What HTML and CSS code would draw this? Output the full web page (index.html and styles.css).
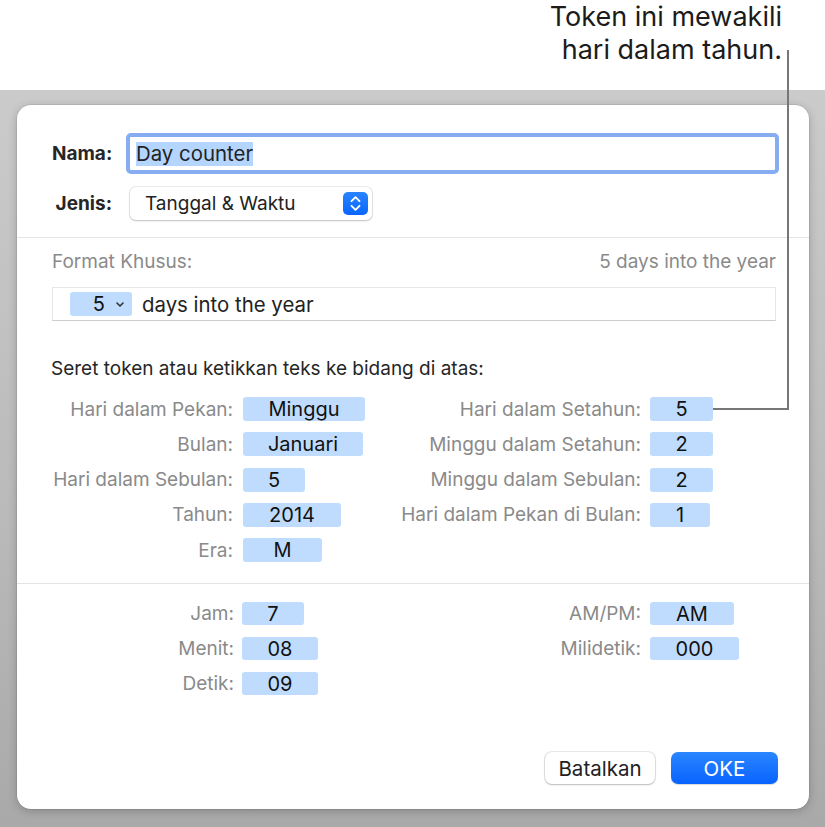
FILE: index.html
```html
<!DOCTYPE html>
<html lang="id">
<head>
<meta charset="utf-8">
<title>Day counter</title>
<link rel="stylesheet" href="styles.css">
</head>
<body>
<div class="page">
  <header class="note">
    <p>Token ini mewakili<br>hari dalam tahun.</p>
  </header>

  <main class="backdrop">
    <section class="dialog">
      <div class="sec sec-top">
        <div class="frow">
          <span class="flabel">Nama:</span>
          <div class="name-field"><span class="sel">Day counter</span></div>
        </div>
        <div class="frow frow-jenis">
          <span class="flabel">Jenis:</span>
          <div class="popup">
            <span class="popup-text">Tanggal &amp; Waktu</span>
            <span class="stepper">
              <svg width="25" height="23" viewBox="0 0 25 23"><path d="M8.5 9.2 L12.5 5.2 L16.5 9.2 M8.5 13.8 L12.5 17.8 L16.5 13.8" fill="none" stroke="#fff" stroke-width="1.9" stroke-linecap="round" stroke-linejoin="round"/></svg>
            </span>
          </div>
        </div>
      </div>

      <div class="sec sec-date">
        <div class="fmt-head">
          <span>Format Khusus:</span>
          <span>5 days into the year</span>
        </div>
        <div class="fmt-field">
          <span class="tok tok-drop">5<svg width="8" height="5" viewBox="0 0 8 5"><path d="M1 1 L4 4 L7 1" fill="none" stroke="#333" stroke-width="1.6" stroke-linecap="round" stroke-linejoin="round"/></svg></span>
          <span class="fmt-text">days into the year</span>
        </div>
        <p class="hint">Seret token atau ketikkan teks ke bidang di atas:</p>
        <div class="tgrid">
          <span class="tl">Hari dalam Pekan:</span><span class="tok t1 w122">Minggu</span>
          <span class="tl">Hari dalam Setahun:</span><span class="tok t2 w63">5</span>

          <span class="tl">Bulan:</span><span class="tok t1 w120">Januari</span>
          <span class="tl">Minggu dalam Setahun:</span><span class="tok t2 w63">2</span>

          <span class="tl">Hari dalam Sebulan:</span><span class="tok t1 w62">5</span>
          <span class="tl">Minggu dalam Sebulan:</span><span class="tok t2 w63">2</span>

          <span class="tl">Tahun:</span><span class="tok t1 w98">2014</span>
          <span class="tl">Hari dalam Pekan di Bulan:</span><span class="tok t2 w60">1</span>

          <span class="tl">Era:</span><span class="tok t1 w79">M</span>
          <span></span><span></span>
        </div>
      </div>

      <div class="sec sec-time">
        <div class="tgrid tgrid-time">
          <span class="tl">Jam:</span><span class="tok t1 tt w62">7</span>
          <span class="tl">AM/PM:</span><span class="tok t2 w84">AM</span>

          <span class="tl">Menit:</span><span class="tok t1 tt w76">08</span>
          <span class="tl">Milidetik:</span><span class="tok t2 w89">000</span>

          <span class="tl">Detik:</span><span class="tok t1 tt w76">09</span>
          <span></span><span></span>
        </div>
        <div class="buttons">
          <button class="btn btn-cancel">Batalkan</button>
          <button class="btn btn-ok">OKE</button>
        </div>
      </div>
    </section>
  </main>

  <div class="callout-v"></div>
  <div class="callout-h"></div>
</div>
</body>
</html>
```

FILE: styles.css
```css
* { box-sizing: border-box; }

html, body {
  margin: 0;
  padding: 0;
  background: #fff;
}

body {
  font-family: Inter, "Noto Sans", "Liberation Sans", sans-serif;
  color: #222;
}

.page {
  position: relative;
  width: 825px;
  height: 827px;
  overflow: hidden;
}

/* annotation */
.note {
  height: 90px;
  padding-right: 43px;
}
.note p {
  margin: 0;
  text-align: right;
  font-size: 27px;
  line-height: 33px;
  color: #1b1b1b;
  padding-top: 0;
}

.callout-v {
  position: absolute;
  left: 787px;
  top: 50px;
  width: 2px;
  height: 360px;
  background: #777;
}
.callout-h {
  position: absolute;
  left: 713px;
  top: 408px;
  width: 76px;
  height: 2px;
  background: #777;
}

/* backdrop */
.backdrop {
  height: 737px;
  padding: 15px 16px 0 17px;
  background: linear-gradient(#cbcbcb, #b9b9b9 60%, #a9a9a9);
}

.dialog {
  background: #fff;
  border-radius: 14px;
  box-shadow: 0 0 0 0.5px rgba(0,0,0,0.12), 0 2px 10px rgba(0,0,0,0.22);
}

.sec { padding: 0 33px 0 35px; }
.sec + .sec { border-top: 1px solid #e4e4e4; }

/* top section */
.sec-top {
  padding-top: 28px;
  padding-bottom: 17px;
}
.frow {
  display: flex;
  align-items: center;
}
.frow-jenis { margin-top: 13px; }
.flabel {
  width: 60px;
  text-align: right;
  font-weight: 700;
  font-size: 19px;
  color: #262626;
  white-space: nowrap;
}
.name-field {
  flex: 1;
  height: 41px;
  margin-left: 14px;
  margin-right: -3px;
  border: 4px solid #86acf2;
  border-radius: 5px;
  padding-left: 6px;
  display: flex;
  align-items: center;
}
.sel {
  background: #b4d5fe;
  font-size: 20.4px;
  line-height: 24px;
  color: #222;
}
.popup {
  width: 242px;
  height: 33px;
  margin-left: 18px;
  border-radius: 6px;
  background: #fff;
  box-shadow: 0 0 0 1px rgba(0,0,0,0.08), 0 1px 2px rgba(0,0,0,0.18);
  display: flex;
  align-items: center;
  justify-content: space-between;
  padding: 0 4px 0 15px;
  font-size: 19px;
  color: #222;
}
.stepper {
  width: 25px;
  height: 23px;
  border-radius: 5px;
  background: linear-gradient(#2a84ff, #0a66ff);
  display: flex;
}

/* date section */
.sec-date {
  padding-top: 12px;
  padding-bottom: 21px;
}
.fmt-head {
  display: flex;
  justify-content: space-between;
  font-size: 19px;
  line-height: 24px;
  color: #8a8a8a;
}
.fmt-field {
  margin-top: 13px;
  height: 34px;
  border: 1px solid #e6e6e6;
  border-bottom-color: #cdcdcd;
  padding-left: 17px;
  display: flex;
  align-items: center;
  gap: 10px;
}
.fmt-text {
  font-size: 20.4px;
  color: #222;
}
.hint {
  margin: 36px 0 0 -1px;
  font-size: 19px;
  line-height: 24px;
  color: #262626;
}

.tgrid {
  margin-top: 16px;
  display: grid;
  grid-template-columns: 181px 162px 246px 1fr;
  grid-auto-rows: 24px;
  row-gap: 11.25px;
  align-items: center;
}
.tl {
  text-align: right;
  font-size: 19px;
  color: #8a8a8a;
  white-space: nowrap;
}
.tok {
  height: 24px;
  border-radius: 3px;
  background: #bfdcfe;
  display: flex;
  align-items: center;
  justify-content: center;
  font-size: 20px;
  color: #111;
}
.t1 { margin-left: 10px; }
.t2 { margin-left: 9px; }

.tok-drop {
  width: 62px;
  justify-content: flex-end;
  gap: 11px;
  padding-right: 8px;
}

.w60 { width: 60px; }
.w62 { width: 62px; }
.w63 { width: 63px; }
.w76 { width: 76px; }
.w79 { width: 79px; }
.w84 { width: 84px; }
.w89 { width: 89px; }
.w98 { width: 98px; }
.w120 { width: 120px; }
.w122 { width: 122px; }

/* time section */
.sec-time {
  padding-top: 18px;
  padding-bottom: 25px;
}
.tgrid-time {
  margin-top: 0;
  grid-template-columns: 182px 161px 246px 1fr;
  grid-auto-rows: 23px;
  row-gap: 12px;
}
.tgrid-time .tok { height: 23px; }
.tt { margin-left: 8px; }

.buttons {
  margin-top: 57px;
  margin-right: -2px;
  display: flex;
  justify-content: flex-end;
  gap: 16px;
}
.btn {
  height: 32px;
  border-radius: 7px;
  font-family: inherit;
  font-size: 20.5px;
  padding: 0;
  cursor: default;
}
.btn-cancel {
  width: 110px;
  background: #fff;
  color: #222;
  border: none;
  box-shadow: 0 0 0 1px rgba(0,0,0,0.09), 0 1px 2px rgba(0,0,0,0.2);
}
.btn-ok {
  width: 107px;
  border: none;
  color: #fff;
  background: linear-gradient(#2b86ff, #0863ff);
  box-shadow: 0 1px 1px rgba(0,0,0,0.15);
}
```
